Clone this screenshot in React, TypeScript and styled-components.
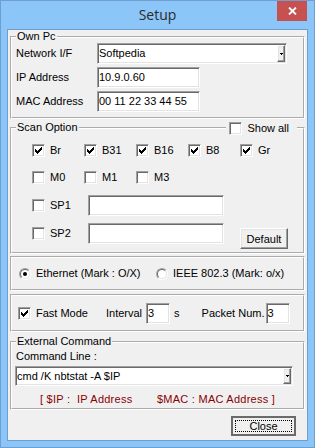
import React from "react";
import styled, { createGlobalStyle, css } from "styled-components";

const GlobalStyle = createGlobalStyle`
  html, body {
    margin: 0;
    padding: 0;
    background: #8cc5f7;
  }
  body {
    font-family: "Liberation Sans", Arial, sans-serif;
    font-size: 11px;
    line-height: 13px;
    color: #000;
  }
`;

// classic 3D borders
const sunken = css`
  box-sizing: border-box;
  background: #fff;
  border: 1px solid;
  border-color: #a0a0a0 #fff #fff #a0a0a0;
  box-shadow: inset 1px 1px 0 #696969, inset -1px -1px 0 #e3e3e3;
`;

const raised = css`
  box-sizing: border-box;
  background: #f0f0f0;
  border: 1px solid;
  border-color: #fff #696969 #696969 #fff;
  box-shadow: inset -1px -1px 0 #a0a0a0, inset 1px 1px 0 #e3e3e3;
`;

const Window = styled.div`
  width: 315px;
  height: 448px;
  box-sizing: border-box;
  background: #8cc5f7;
  border: 1px solid #6f9fd0;
  display: flex;
  flex-direction: column;
`;

const TitleBar = styled.div`
  height: 28px;
  flex: none;
  display: grid;
  grid-template-columns: 1fr auto 1fr;
`;

const Title = styled.div`
  font-family: "Open Sans", "Noto Sans", sans-serif;
  font-size: 14px;
  line-height: 28px;
  color: #2b2b2b;
`;

const CloseBox = styled.div`
  justify-self: end;
  width: 30px;
  height: 20px;
  margin-right: 7px;
  background: #c75050;
  display: flex;
  align-items: center;
  justify-content: center;
`;

const Client = styled.div`
  flex: 1;
  margin: 0 6px 6px;
  padding: 0 2px;
  background: #f0f0f0;
  border: 1px solid #6f9fd0;
  display: flex;
  flex-direction: column;
`;

const Group = styled.fieldset<{ $mt?: number }>`
  position: relative;
  margin: ${(p) => p.$mt ?? 0}px 0 0;
  padding: 0;
  min-inline-size: 0;
  border: 2px groove #fff;
`;

const Legend = styled.legend`
  margin-left: 4px;
  padding: 0 1px;
  line-height: 13px;
`;

const OwnPcBody = styled.div`
  display: flex;
  flex-direction: column;
  gap: 3px;
  padding: 0 0 5px 4px;
`;

const FormRow = styled.div`
  display: flex;
  align-items: center;
  height: 21px;
`;

const FieldLabel = styled.span<{ $w: number }>`
  width: ${(p) => p.$w}px;
  flex: none;
`;

const TextBox = styled.div<{ $w: number; $h?: number }>`
  ${sunken};
  width: ${(p) => p.$w}px;
  height: ${(p) => p.$h ?? 21}px;
  flex: none;
  display: flex;
  align-items: center;
  padding-left: 1px;
`;

const Combo = styled.div<{ $w: number; $h?: number }>`
  ${sunken};
  width: ${(p) => p.$w}px;
  height: ${(p) => p.$h ?? 21}px;
  flex: none;
  display: flex;
  align-items: stretch;
  padding: 1px;
`;

const ComboText = styled.span`
  flex: 1;
  display: flex;
  align-items: center;
`;

const DropButton = styled.span`
  ${raised};
  width: 8px;
  display: flex;
  align-items: center;
  justify-content: center;
`;

const ShowAll = styled.label`
  position: absolute;
  top: -12px;
  right: 6px;
  padding: 0 8px 0 3px;
  background: #f0f0f0;
  display: flex;
  align-items: center;
  gap: 5px;
`;

const ScanBody = styled.div`
  padding: 9px 0 3px 20px;
  display: flex;
  flex-direction: column;
`;

const CheckGrid = styled.div`
  display: grid;
  grid-template-columns: repeat(5, 52px);
  grid-auto-rows: 15px;
  row-gap: 12px;
`;

const CheckItem = styled.label`
  display: flex;
  align-items: center;
  gap: 5px;
`;

const Box = styled.span`
  ${sunken};
  width: 13px;
  height: 13px;
  flex: none;
  display: flex;
  align-items: center;
  justify-content: center;
`;

const SpRow = styled.div<{ $mt: number }>`
  display: flex;
  align-items: flex-start;
  margin-top: ${(p) => p.$mt}px;
`;

const SpLabel = styled.label`
  width: 56px;
  height: 21px;
  flex: none;
  display: flex;
  align-items: center;
  gap: 5px;
`;

const PushButton = styled.button<{ $w: number; $h: number; $mt?: number; $ml?: number }>`
  ${raised};
  width: ${(p) => p.$w}px;
  height: ${(p) => p.$h}px;
  margin: ${(p) => p.$mt ?? 0}px 0 0 ${(p) => p.$ml ?? 0}px;
  padding: 0;
  font-family: inherit;
  font-size: 11px;
  color: #000;
`;

const DefaultButton = styled.button`
  box-sizing: border-box;
  width: 65px;
  height: 20px;
  padding: 2px;
  border: 2px solid #6a6a6a;
  background: #f0f0f0;
  font-family: inherit;
  font-size: 11px;
  color: #000;
  display: flex;
`;

const FocusRect = styled.span`
  flex: 1;
  border: 1px dotted #000;
  display: flex;
  align-items: center;
  justify-content: center;
`;

const RadioRow = styled.div`
  height: 31px;
  display: flex;
  align-items: center;
  padding-left: 7px;
`;

const RadioItem = styled.label<{ $w?: number }>`
  display: flex;
  align-items: center;
  gap: 5px;
  ${(p) => p.$w && `width: ${p.$w}px;`}
  flex: none;
`;

const RadioOuter = styled.span`
  box-sizing: border-box;
  width: 12px;
  height: 12px;
  border-radius: 50%;
  border: 1px solid;
  border-color: #a0a0a0 #fff #fff #a0a0a0;
  display: flex;
`;

const RadioInner = styled.span`
  box-sizing: border-box;
  flex: 1;
  border-radius: 50%;
  border: 1px solid;
  border-color: #696969 #e3e3e3 #e3e3e3 #696969;
  background: #fff;
  display: flex;
  align-items: center;
  justify-content: center;
`;

const Dot = styled.span`
  width: 4px;
  height: 4px;
  border-radius: 50%;
  background: #000;
`;

const FastRow = styled.div`
  height: 34px;
  display: flex;
  align-items: center;
  padding-left: 6px;
`;

const Spaced = styled.span<{ $ml: number }>`
  margin-left: ${(p) => p.$ml}px;
  flex: none;
`;

const CmdBody = styled.div`
  padding: 2px 0 2px 3px;
  display: flex;
  flex-direction: column;
`;

const CmdLabel = styled.span`
  margin-left: 1px;
`;

const Hint = styled.div`
  margin-top: 7px;
  padding-left: 25px;
  color: #880000;
  display: flex;
  white-space: pre;
  letter-spacing: 0.25px;
`;

const HintPart = styled.span<{ $w?: number }>`
  ${(p) => p.$w && `width: ${p.$w}px;`}
  flex: none;
`;

const ButtonBar = styled.div`
  margin-top: 6px;
  padding-right: 9px;
  display: flex;
  justify-content: flex-end;
`;

const CheckMark = () => (
  <svg width="7" height="7" viewBox="0 0 7 7" shapeRendering="crispEdges">
    <path
      fill="#000"
      d="M6 0h1v1h-1z M5 1h2v1h-2z M0 2h1v1h-1z M4 2h3v1h-3z M0 3h2v1h-2z M3 3h3v1h-3z M0 4h5v1h-5z M1 5h3v1h-3z M2 6h1v1h-1z"
    />
  </svg>
);

const CheckBox = ({ checked }: { checked?: boolean }) => <Box>{checked && <CheckMark />}</Box>;

const Radio = ({ checked }: { checked?: boolean }) => (
  <RadioOuter>
    <RadioInner>{checked && <Dot />}</RadioInner>
  </RadioOuter>
);

const DropArrow = () => (
  <DropButton>
    <svg width="3" height="2" viewBox="0 0 3 2" shapeRendering="crispEdges">
      <path fill="#000" d="M0 0h3v1h-3z M1 1h1v1h-1z" />
    </svg>
  </DropButton>
);

const scanChecks = [
  { name: "Br", on: true },
  { name: "B31", on: true },
  { name: "B16", on: true },
  { name: "B8", on: true },
  { name: "Gr", on: true },
  { name: "M0", on: false },
  { name: "M1", on: false },
  { name: "M3", on: false },
];

export default function App() {
  return (
    <>
      <GlobalStyle />
      <Window>
        <TitleBar>
          <span />
          <Title>Setup</Title>
          <CloseBox>
            <svg width="9" height="8" viewBox="0 0 9 8">
              <path d="M1 0.5 L8 7.5 M8 0.5 L1 7.5" stroke="#fff" strokeWidth="1.8" />
            </svg>
          </CloseBox>
        </TitleBar>

        <Client>
          <Group>
            <Legend>Own Pc</Legend>
            <OwnPcBody>
              <FormRow>
                <FieldLabel $w={81}>Network I/F</FieldLabel>
                <Combo $w={190}>
                  <ComboText>Softpedia</ComboText>
                  <DropArrow />
                </Combo>
              </FormRow>
              <FormRow>
                <FieldLabel $w={81}>IP Address</FieldLabel>
                <TextBox $w={103}>10.9.0.60</TextBox>
              </FormRow>
              <FormRow>
                <FieldLabel $w={81}>MAC Address</FieldLabel>
                <TextBox $w={103}>00 11 22 33 44 55</TextBox>
              </FormRow>
            </OwnPcBody>
          </Group>

          <Group $mt={2}>
            <Legend>Scan Option</Legend>
            <ShowAll>
              <CheckBox />
              Show all
            </ShowAll>
            <ScanBody>
              <CheckGrid>
                {scanChecks.map((c) => (
                  <CheckItem key={c.name}>
                    <CheckBox checked={c.on} />
                    {c.name}
                  </CheckItem>
                ))}
              </CheckGrid>
              <SpRow $mt={10}>
                <SpLabel>
                  <CheckBox />
                  SP1
                </SpLabel>
                <TextBox $w={136} />
              </SpRow>
              <SpRow $mt={7}>
                <SpLabel>
                  <CheckBox />
                  SP2
                </SpLabel>
                <TextBox $w={136} />
                <PushButton $w={48} $h={21} $mt={5} $ml={16}>
                  Default
                </PushButton>
              </SpRow>
            </ScanBody>
          </Group>

          <Group $mt={2}>
            <RadioRow>
              <RadioItem $w={137}>
                <Radio checked />
                {"Ethernet  (Mark : O/X)"}
              </RadioItem>
              <RadioItem>
                <Radio />
                {"IEEE 802.3  (Mark: o/x)"}
              </RadioItem>
            </RadioRow>
          </Group>

          <Group $mt={3}>
            <FastRow>
              <CheckItem>
                <CheckBox checked />
                Fast Mode
              </CheckItem>
              <Spaced $ml={18}>Interval</Spaced>
              <Spaced $ml={4}>
                <TextBox $w={24}>3</TextBox>
              </Spaced>
              <Spaced $ml={4}>s</Spaced>
              <Spaced $ml={22}>Packet Num.</Spaced>
              <Spaced $ml={1}>
                <TextBox $w={24}>3</TextBox>
              </Spaced>
            </FastRow>
          </Group>

          <Group $mt={3}>
            <Legend>External Command</Legend>
            <CmdBody>
              <CmdLabel>Command Line :</CmdLabel>
              <Combo $w={278} $h={20} style={{ marginTop: 3 }}>
                <ComboText>cmd /K nbtstat -A $IP</ComboText>
                <DropArrow />
              </Combo>
              <Hint>
                <HintPart $w={117}>{"[ $IP :  IP Address"}</HintPart>
                <HintPart>{"$MAC : MAC Address ]"}</HintPart>
              </Hint>
            </CmdBody>
          </Group>

          <ButtonBar>
            <DefaultButton>
              <FocusRect>Close</FocusRect>
            </DefaultButton>
          </ButtonBar>
        </Client>
      </Window>
    </>
  );
}
